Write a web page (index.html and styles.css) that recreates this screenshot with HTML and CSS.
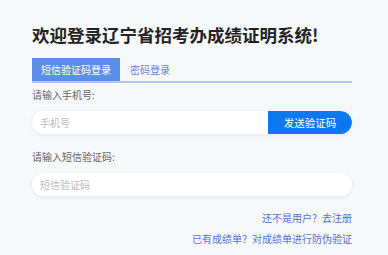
FILE: index.html
```html
<!DOCTYPE html>
<html lang="zh-CN">
<head>
  <meta charset="UTF-8">
  <meta name="viewport" content="width=device-width, initial-scale=1.0">
  <title>辽宁省招考办成绩证明系统</title>
  <link rel="stylesheet" href="styles.css">
</head>
<body>
  <div class="login">
    <h1>欢迎登录辽宁省招考办成绩证明系统!</h1>
    <div class="tabs">
      <span class="tab active">短信验证码登录</span>
      <span class="tab">密码登录</span>
    </div>
    <label class="label" for="phone">请输入手机号:</label>
    <div class="field with-btn">
      <input type="text" id="phone" placeholder="手机号">
      <button class="send-btn">发送验证码</button>
    </div>
    <label class="label second" for="code">请输入短信验证码:</label>
    <div class="field">
      <input type="text" id="code" placeholder="短信验证码">
    </div>
    <div class="links">
      <a href="#" class="link first">还不是用户？去注册</a>
      <a href="#" class="link">已有成绩单？对成绩单进行防伪验证</a>
    </div>
  </div>
</body>
</html>
```

FILE: styles.css
```css
body { margin: 0; background: #f7f8fa; font-family: "Noto Sans CJK SC", "Noto Sans", sans-serif; }
.login { width: 320px; padding: 23px 0 0 32px; }
h1 { margin: 0; font-size: 17.5px; line-height: 24px; font-weight: bold; color: #222; }
.tabs { display: flex; margin-top: 11px; border-bottom: 2px solid #b8c5f2; height: 23px; }
.tab { display: flex; align-items: center; font-size: 10px; color: #5b86e5; padding: 0 10px; white-space: nowrap; }
.tab.active { width: 88px; box-sizing: border-box; padding: 0 0 0 9px; background: #5b8ee6; color: #fff; }
.label { display: block; margin-top: 5px; font-size: 10px; line-height: 14px; color: #666; }
.label.second { margin-top: 16px; }
.field { display: flex; height: 23px; margin-top: 9px; border-radius: 12px; background: #fff; box-shadow: 0 1px 4px rgba(0, 0, 0, 0.08); overflow: hidden; }
.field input { flex: 1; border: none; outline: none; background: transparent; padding: 0 8px; font-family: inherit; font-size: 10px; color: #333; }
.field input::placeholder { color: #bbb; }
.send-btn { width: 84px; border: none; background: #0b78f0; color: #fff; font-family: inherit; font-size: 10.5px; padding: 0; border-radius: 0 12px 12px 0; }
.links { display: flex; flex-direction: column; align-items: flex-end; margin-top: 15px; }
.link { font-size: 10px; line-height: 14px; color: #4f72e0; text-decoration: none; }
.link + .link { margin-top: 7px; }
```
